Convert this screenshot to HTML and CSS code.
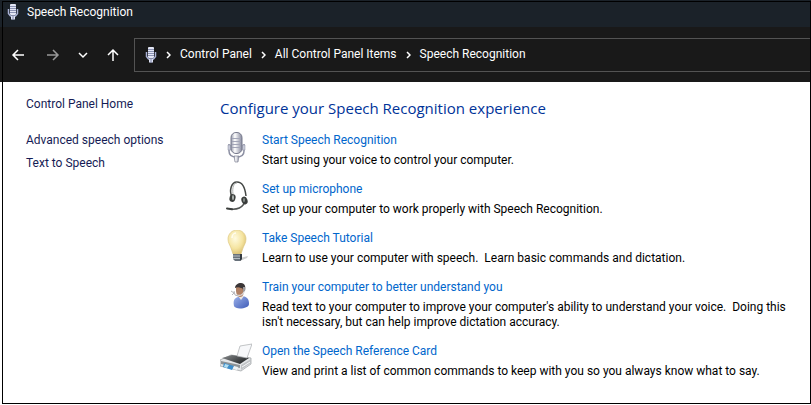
FILE: index.html
```html
<!DOCTYPE html>
<html lang="en">
<head>
    <meta charset="UTF-8">
    <meta name="viewport" content="width=device-width, initial-scale=1.0">
    <title>Speech Recognition</title>
    <link rel="stylesheet" href="styles.css">
</head>
<body>
    <!-- Small microphone, used in the title bar and the address bar -->
    <svg class="sprite" aria-hidden="true">
        <symbol id="mic-small" viewBox="0 0 12 16">
            <rect x="3" y="0" width="6" height="11" rx="1" fill="#e4e7f5"/>
            <path d="M3 2.5h6M3 4.5h6M3 6.5h6M3 8.5h6" stroke="#8c93b4"/>
            <path d="M1.5 5v4.5l2 2.500h5l2-2.500V5" fill="none" stroke="#a9b1d4" stroke-width="1.500"/>
            <path d="M4 12h4v3.500H4z" fill="#dfe3f4"/>
            <path d="M6 12v4" stroke="#7d84a8"/>
        </symbol>
    </svg>

    <div class="window">
        <header class="title-bar">
            <svg class="mic-small"><use href="#mic-small"/></svg>
            <span>Speech Recognition</span>
        </header>

        <nav class="nav-bar">
            <div class="nav-buttons">
                <button type="button" aria-label="Back">
                    <svg width="14" height="14" viewBox="0 0 14 14"><path d="M13 7H2M7 2L2 7l5 5"/></svg>
                </button>
                <button type="button" class="dim" aria-label="Forward">
                    <svg width="14" height="14" viewBox="0 0 14 14"><path d="M1 7h11M7 2l5 5-5 5"/></svg>
                </button>
                <button type="button" class="recent" aria-label="Recent locations">
                    <svg width="10" height="14" viewBox="0 0 10 14"><path d="M1 5l4 4 4-4"/></svg>
                </button>
                <button type="button" aria-label="Up">
                    <svg width="14" height="14" viewBox="0 0 14 14"><path d="M7 13V2M2 7l5-5 5 5"/></svg>
                </button>
            </div>
            <div class="address">
                <svg class="mic-small"><use href="#mic-small"/></svg>
                <svg class="chevron" viewBox="0 0 5 8"><path d="M1 1l3 3-3 3"/></svg>
                <a href="#">Control Panel</a>
                <svg class="chevron" viewBox="0 0 5 8"><path d="M1 1l3 3-3 3"/></svg>
                <a href="#">All Control Panel Items</a>
                <svg class="chevron" viewBox="0 0 5 8"><path d="M1 1l3 3-3 3"/></svg>
                <a href="#">Speech Recognition</a>
            </div>
        </nav>

        <div class="content">
            <aside class="sidebar">
                <a href="#" class="home">Control Panel Home</a>
                <a href="#">Advanced speech options</a>
                <a href="#">Text to Speech</a>
            </aside>

            <main class="main">
                <h1>Configure your Speech Recognition experience</h1>

                <div class="task">
                    <svg class="icon" viewBox="0 0 32 32">
                        <defs>
                            <linearGradient id="metal">
                                <stop offset="0" stop-color="#9497a8"/>
                                <stop offset=".35" stop-color="#ffffff"/>
                                <stop offset="1" stop-color="#85889c"/>
                            </linearGradient>
                        </defs>
                        <path d="M9 12v7c0 4 3 6 7.500 6s7.500-2 7.500-6v-7" fill="none" stroke="#8d90a3" stroke-width="1.500"/>
                        <path d="M8 13h3v5H8zM22 13h3v5h-3z" fill="#c7cad8" stroke="#898ca0" stroke-width=".5"/>
                        <rect x="11" y="0.500" width="11" height="21" rx="5" fill="url(#metal)" stroke="#777a8d"/>
                        <path d="M12 6.500h9M12 9.500h9M12 12.500h9M12 15.500h9" stroke="#a2a5b7"/>
                        <path d="M14 24h5l-1 6h-3z" fill="url(#metal)" stroke="#85889a" stroke-width=".7"/>
                    </svg>
                    <div class="text">
                        <a href="#">Start Speech Recognition</a>
                        <p>Start using your voice to control your computer.</p>
                    </div>
                </div>

                <div class="task">
                    <svg class="icon" viewBox="0 0 32 32">
                        <path d="M12 16C9 10 11 1 17 1c5 0 8 5 9 14" fill="none" stroke="#444745" stroke-width="1.500"/>
                        <path d="M13 13c-1-7 1-11 4-11" fill="none" stroke="#aeb1af"/>
                        <ellipse cx="12.500" cy="17" rx="3" ry="4" fill="#3c3f3d" transform="rotate(15 12.500 17)"/>
                        <ellipse cx="13" cy="16.500" rx="1" ry="2.500" fill="#aeb4b1"/>
                        <ellipse cx="24.500" cy="19.500" rx="3" ry="4" fill="#3a3d3b" transform="rotate(-20 24.500 19.500)"/>
                        <ellipse cx="24" cy="19" rx="1" ry="2" fill="#89918d"/>
                        <path d="M24 23c-3 4-7 6-14 5" fill="none" stroke="#515452" stroke-width="1.500"/>
                        <path d="M7 27.500l5 .8" stroke="#3c3f3d" stroke-width="2" stroke-linecap="round"/>
                    </svg>
                    <div class="text">
                        <a href="#">Set up microphone</a>
                        <p>Set up your computer to work properly with Speech Recognition.</p>
                    </div>
                </div>

                <div class="task">
                    <svg class="icon" viewBox="0 0 32 32">
                        <defs>
                            <radialGradient id="glow" cx=".4" cy=".35" r=".7">
                                <stop offset="0" stop-color="#fffbe0"/>
                                <stop offset=".6" stop-color="#f5e4a0"/>
                                <stop offset="1" stop-color="#d8bd70"/>
                            </radialGradient>
                        </defs>
                        <path d="M20 28l8-2-1 2-7 3z" fill="#cfcfcf"/>
                        <path d="M17 0c-5 0-9 4-9 9 0 4 2 6 3 9 1 2 1 4 2 6h8c1-2 1-4 2-6 1-3 3-5 3-9 0-5-4-9-9-9z" fill="url(#glow)" stroke="#dec884" stroke-width=".7"/>
                        <path d="M12 8c0-3 2-5 4-5" fill="none" stroke="#fffdf0" stroke-width="1.500"/>
                        <path d="M13 24h9v5l-2 2h-5l-2-2z" fill="#68717b"/>
                        <path d="M13 26h8M13 28.500h8" stroke="#b4bbc1"/>
                        <path d="M20 24h2v5l-2 2z" fill="#343a42"/>
                    </svg>
                    <div class="text">
                        <a href="#">Take Speech Tutorial</a>
                        <p>Learn to use your computer with speech.  Learn basic commands and dictation.</p>
                    </div>
                </div>

                <div class="task">
                    <svg class="icon" viewBox="0 0 32 32">
                        <defs>
                            <linearGradient id="shirt" x2="1" y2="1">
                                <stop offset="0" stop-color="#9db2ea"/>
                                <stop offset="1" stop-color="#3f5cb8"/>
                            </linearGradient>
                        </defs>
                        <path d="M14 27c-1-5 0-8 4-9l5-1c4 1 6 3 6 8 0 5-14 6-15 2z" fill="url(#shirt)"/>
                        <path d="M18 17l3 4 3-4-5-1z" fill="#e9e6e4"/>
                        <path d="M16 9c1-3 8-3 8 1 0 5-1 8-4 8s-4-4-4-7z" fill="#b18165"/>
                        <path d="M15 9c0-3 3-5 6-5 4 0 5 4 4 8l-2 1c0-3 0-4-2-4-2-1-4-1-6 0z" fill="#3a3536"/>
                        <path d="M24 8v5c-1 3-4 4-7 3" fill="none" stroke="#dddde0" stroke-width="1.200"/>
                        <path d="M11 12l3 2-2 2M14 12l1 4M15 16l3 1" fill="none" stroke="#b4b4b8"/>
                    </svg>
                    <div class="text">
                        <a href="#">Train your computer to better understand you</a>
                        <p>Read text to your computer to improve your computer's ability to understand your voice.  Doing this isn't necessary, but can help improve dictation accuracy.</p>
                    </div>
                </div>

                <div class="task">
                    <svg class="icon" viewBox="0 0 32 32">
                        <defs>
                            <linearGradient id="lid" x2="1" y2=".6">
                                <stop offset="0" stop-color="#8b8e90"/>
                                <stop offset="1" stop-color="#25282a"/>
                            </linearGradient>
                        </defs>
                        <path d="M0 17l11-5 20 3v6l-10 7-21-5z" fill="#e4e6e8" stroke="#9a9ea1" stroke-width=".7"/>
                        <path d="M2 15l10-3 17 3-9 6z" fill="url(#lid)"/>
                        <path d="M17 13l3-10 12-2-5 14z" fill="#f7f8fa" stroke="#a9acaf" stroke-width=".7"/>
                        <path d="M1 18l19 4v3L1 21z" fill="#8d9397"/>
                        <path d="M21 22l10-6v4l-10 7z" fill="#bfc2c5"/>
                        <path d="M4 20l10 3-2 4-9-3z" fill="#3d8dcb"/>
                        <path d="M5 21l4 1-2 3-3-1z" fill="#b4dff0"/>
                        <path d="M14 23l4 1-1 3-4-1z" fill="#edf3f6"/>
                        <path d="M22 24l8-5" stroke="#f6f7f8"/>
                    </svg>
                    <div class="text">
                        <a href="#">Open the Speech Reference Card</a>
                        <p>View and print a list of common commands to keep with you so you always know what to say.</p>
                    </div>
                </div>
            </main>
        </div>
    </div>
</body>
</html>
```

FILE: styles.css
```css
* {
    box-sizing: border-box;
}

body {
    margin: 0;
    background-color: #fff;
    font-family: "Segoe UI", Roboto, sans-serif;
    font-size: 12px;
    line-height: 15px;
    color: #000;
}

a {
    text-decoration: none;
}

.sprite {
    display: none;
}

.window {
    position: relative;
    min-height: 100vh;
}

/* Thin frame drawn over the window edges */
.window::after {
    content: "";
    position: absolute;
    inset: 1px 0 1px 2px;
    border: 1px solid #000;
    pointer-events: none;
}

.mic-small {
    width: 12px;
    height: 16px;
    flex: none;
}

.title-bar {
    display: flex;
    align-items: center;
    gap: 8px;
    height: 27px;
    padding: 0 7px 3px;
    background-color: #1b2229;
    color: #fff;
}

.nav-bar {
    display: flex;
    align-items: center;
    gap: 14px;
    height: 55px;
    padding-left: 11px;
    background-color: #191919;
}

.nav-buttons {
    display: flex;
    gap: 21px;
}

.nav-buttons button {
    display: flex;
    padding: 0;
    border: none;
    background: none;
    color: #fff;
}

.nav-buttons .dim {
    color: #999;
}

.nav-buttons .recent {
    margin: 0 -3px;
}

.nav-bar path {
    fill: none;
    stroke: currentColor;
    stroke-width: 1.5;
}

.address {
    display: flex;
    flex: 1;
    align-items: center;
    gap: 9px;
    height: 34px;
    padding-left: 10px;
    border: 1px solid #535353;
    border-right: none;
    color: #fff;
}

.address a {
    color: #fff;
}

.chevron {
    width: 5px;
    height: 8px;
    flex: none;
}

.content {
    display: flex;
}

.sidebar {
    display: flex;
    flex-direction: column;
    gap: 8px;
    width: 220px;
    flex: none;
    padding: 15px 0 0 26px;
}

.sidebar a {
    color: #151c55;
}

.sidebar .home {
    margin-bottom: 13px;
}

.main {
    flex: 1;
    padding: 16px 16px 8px 0;
}

h1 {
    margin: 0 0 14px;
    font-family: "Segoe UI", "Open Sans", sans-serif;
    font-size: 15px;
    font-weight: normal;
    line-height: 20px;
    color: #003399;
}

.task {
    display: flex;
    gap: 10px;
    margin-bottom: 13px;
}

.icon {
    width: 32px;
    height: 32px;
    flex: none;
}

.text {
    padding-top: 1px;
}

.text a {
    display: block;
    margin-bottom: 5px;
    color: #0066cc;
}

.text p {
    margin: 0;
    white-space: pre-wrap;
}
```
